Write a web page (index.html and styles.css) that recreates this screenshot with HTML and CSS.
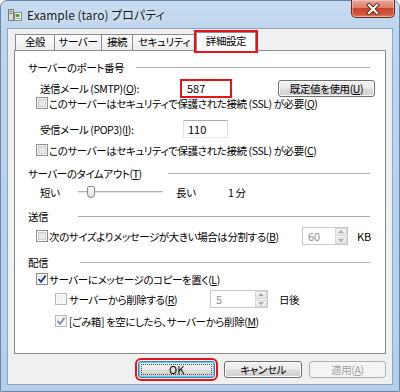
FILE: index.html
```html
<!DOCTYPE html>
<html lang="ja">
<head>
  <meta charset="UTF-8">
  <meta name="viewport" content="width=device-width, initial-scale=1.0">
  <title>Example (taro) プロパティ</title>
  <link rel="stylesheet" href="styles.css">
</head>

<body>
  <div class="window">
    <div class="titlebar">
      <svg class="app-icon" width="14" height="14" viewBox="0 0 14 14">
        <rect x="0.5" y="1.5" width="5" height="11" fill="#d9d9d9" stroke="#7a7a7a"/>
        <rect x="1.5" y="3" width="3" height="1" fill="#7a7a7a"/>
        <rect x="1.5" y="5" width="3" height="1" fill="#7a7a7a"/>
        <rect x="6.5" y="4.5" width="7" height="8" fill="#f4f4f4" stroke="#8a8a8a"/>
        <rect x="7.5" y="6" width="4" height="3" fill="#3fae3f"/>
        <rect x="7.5" y="10" width="5" height="1" fill="#9a9a9a"/>
      </svg>
      <span class="title">Example (taro) プロパティ</span>
      <div class="close">
        <svg width="14" height="12" viewBox="0 0 14 12">
          <path d="M3 2 L11 10 M11 2 L3 10" stroke="#5a2118" stroke-width="4" stroke-linecap="square"/>
          <path d="M3 2 L11 10 M11 2 L3 10" stroke="#ffffff" stroke-width="2.2" stroke-linecap="square"/>
        </svg>
      </div>
    </div>

    <div class="client">
      <div class="tabs">
        <div class="tab t-general">全般</div>
        <div class="tab t-server">サーバー</div>
        <div class="tab t-conn">接続</div>
        <div class="tab t-sec">セキュリティ</div>
        <div class="tab active t-adv">詳細設定</div>
      </div>

      <div class="panel">
        <div class="group head-port"><span class="group-label">サーバーのポート番号</span><i class="rule"></i></div>

        <div class="row row-smtp">
          <span class="label lbl-smtp">送信メール (SMTP)(<u>O</u>):</span>
          <div class="field field-smtp">587</div>
          <button class="btn btn-defaults">既定値を使用(<u>U</u>)</button>
        </div>

        <div class="row row-check row-ssl1">
          <span class="cb"></span>
          <span class="cb-text">このサーバーはセキュリティで保護された接続 (SSL) が必要(<u>Q</u>)</span>
        </div>

        <div class="row row-pop">
          <span class="label lbl-pop">受信メール (POP3)(<u>I</u>):</span>
          <div class="field field-pop">110</div>
        </div>

        <div class="row row-check row-ssl2">
          <span class="cb"></span>
          <span class="cb-text">このサーバーはセキュリティで保護された接続 (SSL) が必要(<u>C</u>)</span>
        </div>

        <div class="group head-timeout"><span class="group-label">サーバーのタイムアウト(<u>T</u>)</span><i class="rule"></i></div>

        <div class="row row-slider">
          <span class="lbl-short">短い</span>
          <div class="slider"><i class="track"></i><i class="thumb"></i></div>
          <span class="lbl-long">長い</span>
          <span>1 分</span>
        </div>

        <div class="group head-send"><span class="group-label">送信</span><i class="rule"></i></div>

        <div class="row row-check row-split">
          <span class="cb"></span>
          <span class="cb-text split-text">次のサイズよりメッセージが大きい場合は分割する(<u>B</u>)</span>
          <div class="spin spin-size disabled"><span class="spin-val">60</span><span class="spin-btns"><i class="up"></i><i class="down"></i></span></div>
          <span class="unit-kb">KB</span>
        </div>

        <div class="group head-deliver"><span class="group-label">配信</span><i class="rule"></i></div>

        <div class="row row-check row-copy">
          <span class="cb checked">
            <svg width="10" height="10" viewBox="0 0 10 10"><path d="M1.5 5 L4 7.8 L8.6 1.6" fill="none" stroke="#21417e" stroke-width="1.8"/></svg>
          </span>
          <span class="cb-text">サーバーにメッセージのコピーを置く(<u>L</u>)</span>
        </div>

        <div class="row row-check row-sub row-delete">
          <span class="cb dim"></span>
          <span class="cb-text delete-text">サーバーから削除する(<u>R</u>)</span>
          <div class="spin spin-days disabled"><span class="spin-val">5</span><span class="spin-btns"><i class="up"></i><i class="down"></i></span></div>
          <span class="unit-days">日後</span>
        </div>

        <div class="row row-check row-sub row-trash">
          <span class="cb checked dim">
            <svg width="10" height="10" viewBox="0 0 10 10"><path d="M1.5 5 L4 7.8 L8.6 1.6" fill="none" stroke="#7f93b5" stroke-width="1.8"/></svg>
          </span>
          <span class="cb-text">[ごみ箱] を空にしたら、サーバーから削除(<u>M</u>)</span>
        </div>
      </div>

      <div class="actions">
        <button class="btn btn-ok"><span class="focus">OK</span></button>
        <button class="btn btn-cancel">キャンセル</button>
        <button class="btn btn-apply" disabled>適用(<u>A</u>)</button>
      </div>
    </div>
  </div>
</body>
</html>
```

FILE: styles.css
```css
* {
  margin: 0;
  padding: 0;
  box-sizing: border-box;
}

body {
  width: 400px;
  height: 392px;
  overflow: hidden;
  font-family: "Noto Sans CJK JP", sans-serif;
  font-size: 10.5px;
  font-feature-settings: "palt";
  letter-spacing: -0.4px;
  color: #000;
  background: #fff;
}

u {
  text-decoration: underline;
  text-underline-offset: 1px;
}

/* window frame */
.window {
  width: 400px;
  height: 392px;
  display: flex;
  flex-direction: column;
  background: linear-gradient(to bottom, #c6dbf0 0, #bcd4ec 40px, #b6cfe9 100%);
  border: 1px solid #6a86a6;
  border-radius: 7px 7px 0 0;
}

.titlebar {
  height: 27px;
  display: flex;
  align-items: center;
  padding-left: 7px;
}

.app-icon {
  margin-top: 1px;
}

.title {
  margin-left: 5px;
  font-size: 12px;
  letter-spacing: 0;
  color: #1b1b1b;
  text-shadow: 0 0 6px rgba(255, 255, 255, 0.9);
}

.close {
  margin-left: auto;
  margin-right: 4px;
  align-self: flex-start;
  width: 44px;
  height: 18px;
  margin-top: -1px;
  border: 1px solid #6b2a20;
  border-top: none;
  border-radius: 0 0 5px 5px;
  background: linear-gradient(to bottom, #e9a898 0, #dc7d68 45%, #c8452c 50%, #d5563c 85%, #e48a6e 100%);
  box-shadow: inset 0 0 0 1px rgba(255, 255, 255, 0.35);
  display: flex;
  align-items: center;
  justify-content: center;
}

.client {
  flex: 1;
  margin: 0 6px 6px 6px;
  background: #f0f0f0;
  border: 1px solid #8ea6c2;
  padding: 4px 6px 0 6px;
}

/* tabs */
.tabs {
  height: 17px;
  display: flex;
  align-items: flex-end;
  padding-left: 1px;
  position: relative;
  z-index: 1;
}

.tab {
  height: 16px;
  border: 1px solid #898c95;
  border-bottom: none;
  margin-right: -1px;
  background: linear-gradient(to bottom, #fdfdfd, #ececec);
  text-align: center;
  line-height: 14px;
}

.t-general { width: 40px; }
.t-server { width: 48px; }
.t-conn { width: 32px; }
.t-sec { width: 64px; }

.tab.active {
  width: 60px;
  height: 19px;
  margin-bottom: -1px;
  margin-left: 1px;
  background: #fff;
  line-height: 16px;
  outline: 2px solid #e8121a;
  outline-offset: 0;
}

/* tab page */
.panel {
  height: 304px;
  background: #fff;
  border: 1px solid #898c95;
  display: flex;
  flex-direction: column;
}

.group {
  height: 16px;
  display: flex;
  align-items: center;
  padding-left: 13px;
  padding-right: 15px;
}

.rule {
  flex: 1;
  height: 2px;
  border-top: 1px solid #a9aeb3;
  border-bottom: 1px solid #fff;
  margin-top: 1px;
}

.head-port { margin-top: 8px; }
.head-port .group-label { width: 108px; }
.head-timeout { margin-top: 9px; }
.head-timeout .group-label { width: 140px; }
.head-send { margin-top: 8px; }
.head-send .group-label { width: 50px; }
.head-deliver { margin-top: 9px; }
.head-deliver .group-label { width: 52px; }

.row {
  display: flex;
  align-items: center;
  padding-left: 25px;
  white-space: nowrap;
}

.row-check { padding-left: 21px; }
.row-sub { padding-left: 40px; }

.row-smtp { margin-top: 4px; height: 19px; }
.row-ssl1 { height: 10px; }
.row-pop { margin-top: 12px; height: 18px; }
.row-ssl2 { margin-top: 6px; height: 12px; }
.row-slider { margin-top: 3px; height: 16px; }
.row-split { margin-top: 3px; height: 18px; }
.row-copy { margin-top: 3px; height: 12px; }
.row-delete { margin-top: 5px; height: 18px; }
.row-trash { margin-top: 7px; height: 12px; }

.lbl-smtp { width: 140px; }
.lbl-pop { width: 143px; }

/* inputs */
.field {
  height: 18px;
  border: 1px solid #abadb3;
  border-left-color: #e2e3ea;
  border-right-color: #dbdfe6;
  border-bottom-color: #e3e9ef;
  padding-left: 4px;
  font-size: 11px;
  line-height: 16px;
  letter-spacing: 0;
  background: #fff;
}

.field-smtp {
  width: 52px;
  height: 19px;
  border: 2px solid #e8121a;
  padding-left: 5px;
  line-height: 15px;
}

.field-pop { width: 45px; }

/* checkbox */
.cb {
  width: 12px;
  height: 12px;
  flex: none;
  border: 1px solid #8e8f8f;
  background: linear-gradient(135deg, #d8d8d8, #f8f8f8);
  box-shadow: inset 0 0 0 1px #f4f4f4, inset 0 0 0 2px #d0d0d0;
  display: flex;
  align-items: center;
  justify-content: center;
}

.cb.checked {
  background: linear-gradient(135deg, #e2e2e2, #fbfbfb);
  box-shadow: inset 0 0 0 1px #f4f4f4;
}

.cb.dim {
  border-color: #b8b8b8;
  background: linear-gradient(135deg, #ececec, #fbfbfb);
  box-shadow: inset 0 0 0 1px #f7f7f7;
}

.cb-text {
  margin-left: 1px;
  line-height: 11px;
}

.row-sub .cb-text { margin-left: 2px; }
.split-text { width: 253px; }
.delete-text { width: 141px; }

/* slider */
.lbl-short { width: 38px; }

.slider {
  width: 85px;
  height: 16px;
  position: relative;
}

.slider .track {
  position: absolute;
  left: 0;
  right: 0;
  top: 7px;
  height: 3px;
  border-top: 1px solid #b4b4b4;
  border-bottom: 1px solid #f7f7f7;
  background: #e7eaea;
}

.slider .thumb {
  position: absolute;
  left: 9px;
  top: 2px;
  width: 8px;
  height: 12px;
  border: 1px solid #8a8a8a;
  border-radius: 2px 2px 4px 4px;
  background: linear-gradient(to bottom, #fdfdfd, #e2e2e2);
}

.lbl-long {
  margin-left: 13px;
  width: 52px;
}

/* spinner */
.spin {
  height: 18px;
  display: flex;
  border: 1px solid #c9c9c9;
  background: #fff;
}

.spin-size { width: 46px; }
.spin-days { width: 58px; }

.spin-val {
  flex: 1;
  padding-left: 5px;
  font-size: 11px;
  line-height: 16px;
  letter-spacing: 0;
  color: #8d8d8d;
}

.spin-btns {
  width: 12px;
  display: flex;
  flex-direction: column;
  gap: 1px;
}

.spin-btns i {
  flex: 1;
  background: linear-gradient(to bottom, #f4f4f4, #e4e4e4);
  border: 1px solid #d5d5d5;
  display: flex;
  align-items: center;
  justify-content: center;
}

.spin-btns .up::before,
.spin-btns .down::before {
  content: "";
  border-left: 3px solid transparent;
  border-right: 3px solid transparent;
}

.spin-btns .up::before { border-bottom: 3px solid #a9a9a9; }
.spin-btns .down::before { border-top: 3px solid #a9a9a9; }

.unit-kb { margin-left: 9px; letter-spacing: 0; font-size: 11px; }
.unit-days { margin-left: 11px; }

/* buttons */
.btn {
  font-family: inherit;
  font-size: 10.5px;
  font-feature-settings: "palt";
  letter-spacing: -0.4px;
  color: #000;
  height: 17px;
  border: 1px solid #707070;
  border-radius: 3px;
  background: linear-gradient(to bottom, #f2f2f2 0, #ebebeb 48%, #dddddd 52%, #cfcfcf 100%);
  box-shadow: inset 0 0 0 1px #fcfcfc;
  line-height: 14px;
}

.btn-defaults {
  margin-left: 46px;
  width: 97px;
}

.actions {
  display: flex;
  padding-left: 124px;
  margin-top: 7px;
}

.btn-ok {
  width: 79px;
  font-size: 11px;
  letter-spacing: 0;
  border-color: #3c7fb1;
  box-shadow: inset 0 0 0 1px #48d8fb;
  outline: 2px solid #e8121a;
  outline-offset: 1px;
  padding: 2px;
}

.btn-ok .focus {
  display: block;
  height: 100%;
  border: 1px dotted #4a4a4a;
  line-height: 9px;
}

.btn-cancel {
  width: 79px;
  margin-left: 9px;
}

.btn-apply {
  width: 79px;
  margin-left: 7px;
  color: #a0a0a0;
  border-color: #adb2b5;
  background: #f4f4f4;
  box-shadow: none;
}
```
